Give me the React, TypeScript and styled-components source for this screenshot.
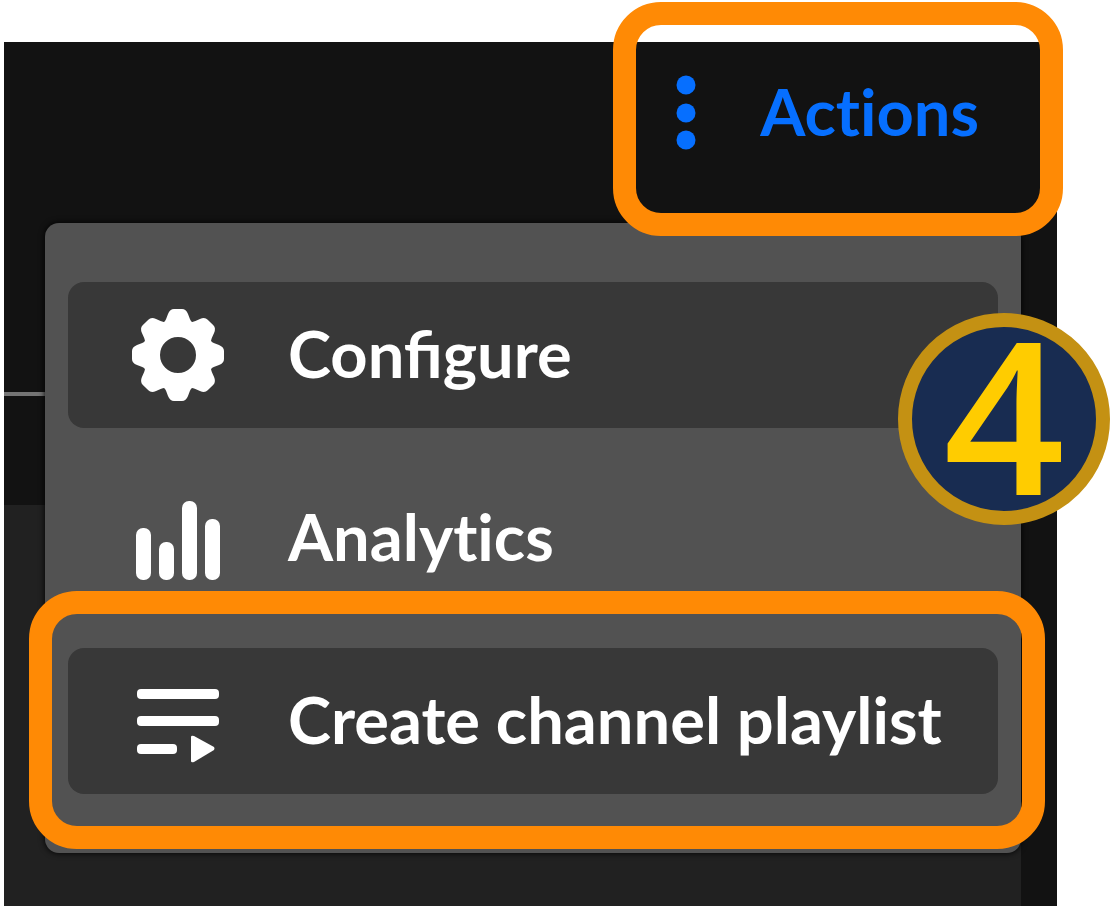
import React from "react";
import styled, { createGlobalStyle } from "styled-components";

const GlobalStyle = createGlobalStyle`
  * { box-sizing: border-box; }
  body { margin: 0; background: #fff; }
`;

const Page = styled.main`
  display: grid;
  min-height: 100vh;
  padding: 42px 58px 1px 4px;
  font-family: Lato, "Open Sans", sans-serif;
`;

const Panel = styled.section`
  display: grid;
  background: #121212;
`;

const Backdrop = styled.div`
  grid-area: 1 / 1;
  display: flex;
  flex-direction: column;
`;

const BackdropHeader = styled.div`
  height: 354px;
  border-bottom: 4px solid #747474;
  margin-right: 36px;
`;

const BackdropBody = styled.div`
  flex: 1;
  margin: 109px 36px 0 0;
  background: #212121;
`;

const Content = styled.div`
  grid-area: 1 / 1;
  position: relative;
  min-width: 0;
  padding: 0 36px 52px 41px;
`;

const Header = styled.header`
  display: flex;
  justify-content: flex-end;
  align-items: flex-start;
  height: 181px;
  padding: 25px 42px 0 0;
`;

const Highlighted = styled.div`
  position: relative;
`;

const Highlight = styled.span<{ $inset: string }>`
  position: absolute;
  z-index: 1;
  inset: ${(p) => p.$inset};
  border: 23px solid #ff8a05;
  border-radius: 48px;
  pointer-events: none;
`;

const ActionsButton = styled.button`
  display: flex;
  align-items: center;
  gap: 64px;
  height: 92px;
  padding: 0;
  border: 0;
  background: none;
  color: #066fff;
  font: 700 65px/92px Lato, "Open Sans", sans-serif;
`;

const Label = styled.span<{ $ligatures?: boolean }>`
  padding-bottom: 4px;
  font-variant-ligatures: ${(p) => (p.$ligatures ? "common-ligatures" : "no-common-ligatures")};
`;

const Menu = styled.div`
  display: flex;
  flex-direction: column;
  gap: 37px;
  padding: 59px 23px;
  border-radius: 14px;
  background: #525252;
  box-shadow: 0 0 6px #000;
`;

const MenuItem = styled.button<{ $filled?: boolean }>`
  display: flex;
  align-items: center;
  gap: 64px;
  width: 100%;
  height: 146px;
  padding: 0 0 0 64px;
  border: 0;
  border-radius: 16px;
  background: ${(p) => (p.$filled ? "#383838" : "transparent")};
  color: #fff;
  font: 700 65px/92px Lato, "Open Sans", sans-serif;
  white-space: nowrap;
`;

const Icon = styled.svg`
  flex: none;
  width: 92px;
  height: 92px;
  fill: currentColor;
`;

const Dots = styled.svg`
  flex: none;
  width: 20px;
  height: 76px;
  fill: currentColor;
`;

const StepBadge = styled.span`
  position: absolute;
  z-index: 2;
  top: 31px;
  right: -112px;
  display: grid;
  place-items: start center;
  width: 212px;
  height: 212px;
  border: 14px solid #c49113;
  border-radius: 50%;
  background: #182c51;
  color: #fc0;
  font: 600 212px/172px "Open Sans", sans-serif;
`;

const GearIcon = () => (
  <Icon viewBox="0 0 92 92" aria-hidden="true">
    <circle cx="46" cy="46" r="27" fill="none" stroke="currentColor" strokeWidth="18" />
    {[0, 45, 90, 135, 180, 225, 270, 315].map((angle) => (
      <path
        key={angle}
        transform={`rotate(${angle} 46 46)`}
        d="M32 14 Q34 11 36 5 Q38 0 42 0 H50 Q54 0 56 5 Q58 11 60 14 L56 22 H36 Z"
      />
    ))}
  </Icon>
);

const BarsIcon = () => (
  <Icon viewBox="0 0 92 92" aria-hidden="true">
    <rect x="4" y="36" width="15" height="52" rx="7" />
    <rect x="27" y="50" width="15" height="38" rx="7" />
    <rect x="50" y="9" width="15" height="79" rx="7" />
    <rect x="73" y="27" width="15" height="61" rx="7" />
  </Icon>
);

const PlaylistIcon = () => (
  <Icon viewBox="0 0 92 92" aria-hidden="true">
    <rect x="5" y="14" width="82" height="10" rx="4" />
    <rect x="5" y="41" width="82" height="10" rx="4" />
    <rect x="5" y="69" width="40" height="10" rx="4" />
    <path d="M59 62 Q59 60 62 61 L82 72 Q83 73 82 75 L62 87 Q59 88 59 86 Z" />
  </Icon>
);

export default function App() {
  return (
    <Page>
      <GlobalStyle />
      <Panel>
        <Backdrop>
          <BackdropHeader />
          <BackdropBody />
        </Backdrop>
        <Content>
          <Header>
            <Highlighted>
              <ActionsButton type="button">
                <Dots viewBox="0 0 20 76" aria-hidden="true">
                  <circle cx="10" cy="10" r="9.5" />
                  <circle cx="10" cy="38" r="9.5" />
                  <circle cx="10" cy="65" r="9.5" />
                </Dots>
                <Label>Actions</Label>
              </ActionsButton>
              <Highlight $inset="-65px -84px -77px -63px" />
            </Highlighted>
          </Header>
          <Menu>
            <Highlighted>
              <MenuItem type="button" $filled>
                <GearIcon />
                <Label $ligatures>Configure</Label>
              </MenuItem>
              <StepBadge>4</StepBadge>
            </Highlighted>
            <MenuItem type="button">
              <BarsIcon />
              <Label>Analytics</Label>
            </MenuItem>
            <Highlighted>
              <MenuItem type="button" $filled>
                <PlaylistIcon />
                <Label>Create channel playlist</Label>
              </MenuItem>
              <Highlight $inset="-57px -47px -55px -39px" />
            </Highlighted>
          </Menu>
        </Content>
      </Panel>
    </Page>
  );
}
